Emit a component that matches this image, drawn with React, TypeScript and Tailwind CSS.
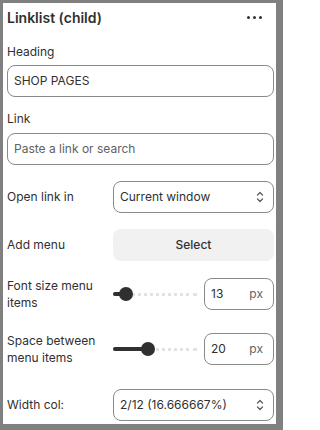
const Chevrons = () => (
  <svg width="10" height="14" viewBox="0 0 10 14" fill="none" className="text-[#5c5c5c]">
    <path d="M2.5 5 5 2.5 7.5 5M2.5 9 5 11.5 7.5 9" stroke="currentColor" strokeWidth="1.3" strokeLinecap="round" strokeLinejoin="round" />
  </svg>
);

const Slider = ({ pos }: { pos: number }) => (
  <div className="relative h-[14px] w-[84px]">
    <div className="absolute left-0 right-0 top-[6px] h-[3px] border-t-[3px] border-dotted border-[#e3e3e3]" />
    <div className="absolute left-0 top-[5px] h-[4px] rounded-full bg-[#303030]" style={{ width: pos }} />
    <div
      className="absolute top-0 h-[14px] w-[14px] rounded-full bg-[#303030]"
      style={{ left: pos - 7 }}
    />
  </div>
);

const NumberBox = ({ value }: { value: string }) => (
  <div className="flex h-[32px] w-[70px] items-center justify-between rounded-[8px] border border-[#8a8a8a] pl-[6px] pr-[10px] text-[12px] text-[#303030]">
    <span>{value}</span>
    <span className="text-[#616161]">px</span>
  </div>
);

export default function App() {
  return (
    <div className="h-[430px] w-[283px] bg-[#808080] pl-[3px] pt-[3px] pr-[7px] pb-[6px] font-['Inter',sans-serif] text-[#303030]">
      <div className="h-full w-full bg-white pl-[4px] pr-[2px]">
        <div className="flex h-[28px] items-center justify-between pr-[12px]">
          <h2 className="text-[14px] font-semibold">Linklist (child)</h2>
          <div className="flex gap-[3px]">
            <span className="h-[3px] w-[3px] rounded-full bg-[#303030]" />
            <span className="h-[3px] w-[3px] rounded-full bg-[#303030]" />
            <span className="h-[3px] w-[3px] rounded-full bg-[#303030]" />
          </div>
        </div>

        <div className="mt-[13px] text-[12px] leading-[16px]">Heading</div>
        <div className="mt-[5px] flex h-[32px] items-center rounded-[8px] border border-[#8a8a8a] px-[6px] text-[12px]">
          SHOP PAGES
        </div>

        <div className="mt-[14px] text-[12px] leading-[16px]">Link</div>
        <div className="mt-[6px] flex h-[32px] items-center rounded-[8px] border border-[#8a8a8a] px-[6px] text-[12px] text-[#616161]">
          Paste a link or search
        </div>

        <div className="mt-[16px] grid grid-cols-[106px_1fr] items-center">
          <span className="text-[12px]">Open link in</span>
          <div className="flex h-[32px] items-center justify-between rounded-[8px] border border-[#8a8a8a] pl-[6px] pr-[8px] text-[12px]">
            <span>Current window</span>
            <Chevrons />
          </div>
        </div>

        <div className="mt-[16px] grid grid-cols-[106px_1fr] items-center">
          <span className="text-[12px]">Add menu</span>
          <button className="flex h-[32px] items-center justify-center rounded-[8px] bg-[#f1f1f1] text-[12px] font-medium">
            Select
          </button>
        </div>

        <div className="mt-[16px] grid grid-cols-[106px_1fr] items-center">
          <span className="text-[12px] leading-[17px]">
            Font size menu
            <br />
            items
          </span>
          <div className="flex items-center justify-between">
            <Slider pos={13} />
            <NumberBox value="13" />
          </div>
        </div>

        <div className="mt-[21px] grid grid-cols-[106px_1fr] items-center">
          <span className="text-[12px] leading-[17px]">
            Space between
            <br />
            menu items
          </span>
          <div className="flex items-center justify-between">
            <Slider pos={35} />
            <NumberBox value="20" />
          </div>
        </div>

        <div className="mt-[23px] grid grid-cols-[106px_1fr] items-center">
          <span className="text-[12px]">Width col:</span>
          <div className="flex h-[32px] items-center justify-between rounded-[8px] border border-[#8a8a8a] pl-[6px] pr-[8px] text-[12px]">
            <span>2/12 (16.666667%)</span>
            <Chevrons />
          </div>
        </div>
      </div>
    </div>
  );
}
